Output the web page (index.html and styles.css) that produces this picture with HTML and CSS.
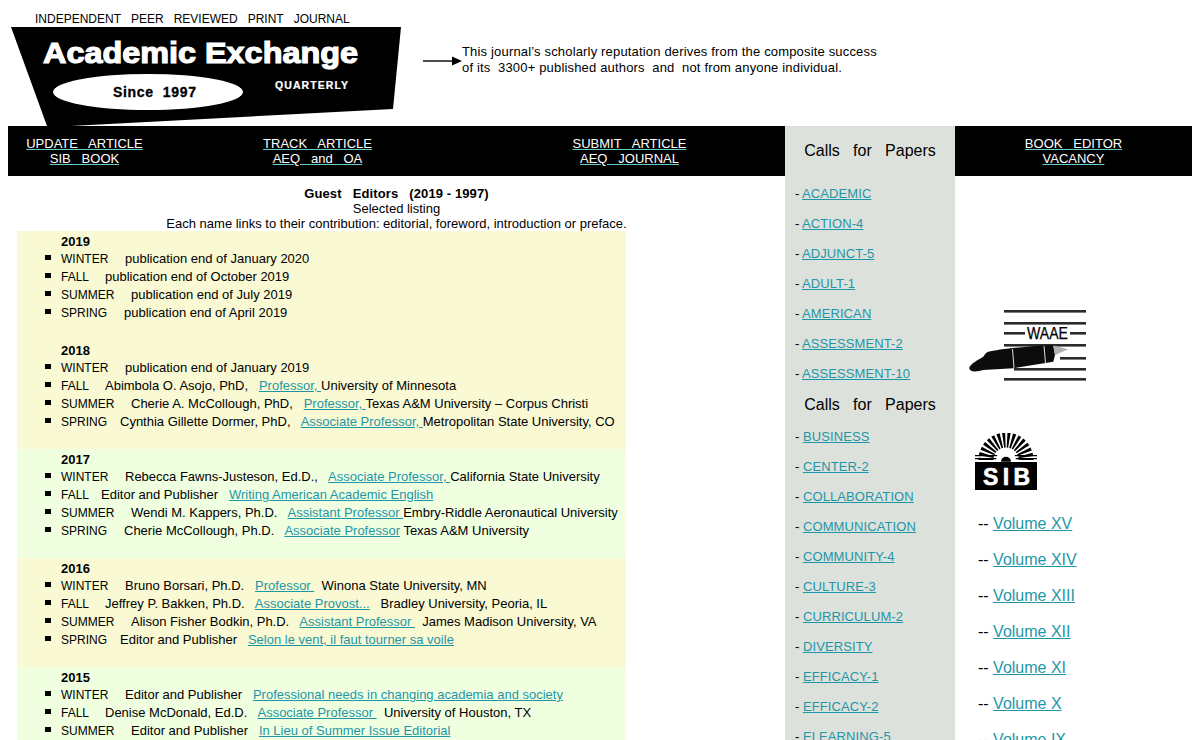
FILE: index.html
```html
<!DOCTYPE html>
<html lang="en">
<head>
<meta charset="utf-8">
<title>Academic Exchange Quarterly</title>
<link rel="stylesheet" href="styles.css">
</head>
<body>
<header class="masthead">
  <div class="brand">
    <div class="tagline">INDEPENDENT&nbsp;&nbsp; PEER&nbsp;&nbsp; REVIEWED&nbsp;&nbsp; PRINT&nbsp;&nbsp; JOURNAL</div>
    <svg class="logo" width="390" height="99" viewBox="0 0 390 99">
      <polygon points="0,0 390,0 382,82 60,99 36,99"/>
      <text class="logo-title" x="32" y="36" textLength="315" lengthAdjust="spacingAndGlyphs">Academic Exchange</text>
      <ellipse cx="137" cy="65" rx="95" ry="18" fill="#fff"/>
      <text class="logo-since" x="102" y="70" textLength="83">Since&nbsp; 1997</text>
      <text class="logo-q" x="264" y="62" textLength="73">QUARTERLY</text>
    </svg>
  </div>
  <div class="motto">
    <svg class="arrow" width="39" height="10" viewBox="0 0 39 10">
      <path d="M0 5H29" stroke="#000" stroke-width="1.4"/>
      <path d="M29 0.5L39 5L29 9.5Z"/>
    </svg>
    <p>This journal&rsquo;s scholarly reputation derives from the composite success<br>of its&nbsp; 3300+ published authors&nbsp; and&nbsp; not from anyone individual.</p>
  </div>
</header>
<div class="layout">
  <div class="left">
    <nav class="nav nav-main">
      <a href="#">UPDATE&nbsp;&nbsp; ARTICLE<br>SIB&nbsp;&nbsp; BOOK</a>
      <a href="#">TRACK&nbsp;&nbsp; ARTICLE<br>AEQ&nbsp;&nbsp; and&nbsp;&nbsp; OA</a>
      <a href="#">SUBMIT&nbsp;&nbsp; ARTICLE<br>AEQ&nbsp;&nbsp; JOURNAL</a>
    </nav>
    <main class="editors">
      <div class="intro"><b>Guest&nbsp;&nbsp; Editors&nbsp;&nbsp; (2019 - 1997)</b><br>Selected listing<br>Each name links to their contribution: editorial, foreword, introduction or preface.</div>
      <section class="band yellow tall">
        <h3>2019</h3>
        <ul>
          <li><span class="season winter">WINTER</span>publication end of January 2020</li>
          <li><span class="season fall">FALL</span>publication end of October 2019</li>
          <li><span class="season summer">SUMMER</span>publication end of July 2019</li>
          <li><span class="season spring">SPRING</span>publication end of April 2019</li>
        </ul>
        <h3 class="later">2018</h3>
        <ul>
          <li><span class="season winter">WINTER</span>publication end of January 2019</li>
          <li><span class="season fall">FALL</span>Abimbola O. Asojo, PhD,&nbsp;&nbsp; <a href="#">Professor, </a>University of Minnesota</li>
          <li><span class="season summer">SUMMER</span>Cherie A. McCollough, PhD,&nbsp;&nbsp; <a href="#">Professor, </a>Texas A&amp;M University &ndash; Corpus Christi</li>
          <li><span class="season spring tight">SPRING</span>Cynthia Gillette Dormer, PhD,&nbsp;&nbsp; <a href="#">Associate Professor, </a>Metropolitan State University, CO</li>
        </ul>
      </section>
      <section class="band green">
        <h3>2017</h3>
        <ul>
          <li><span class="season winter">WINTER</span>Rebecca Fawns-Justeson, Ed.D.,&nbsp;&nbsp; <a href="#">Associate Professor, </a>California State University</li>
          <li><span class="season fall tight">FALL</span>Editor and Publisher&nbsp;&nbsp; <a href="#">Writing American Academic English</a></li>
          <li><span class="season summer">SUMMER</span>Wendi M. Kappers, Ph.D.&nbsp;&nbsp; <a href="#">Assistant Professor </a>Embry-Riddle Aeronautical University</li>
          <li><span class="season spring">SPRING</span>Cherie McCollough, Ph.D.&nbsp;&nbsp; <a href="#">Associate Professor</a> Texas A&amp;M University</li>
        </ul>
      </section>
      <section class="band yellow">
        <h3>2016</h3>
        <ul>
          <li><span class="season winter">WINTER</span>Bruno Borsari, Ph.D.&nbsp;&nbsp; <a href="#">Professor&nbsp;</a>&nbsp; Winona State University, MN</li>
          <li><span class="season fall">FALL</span>Jeffrey P. Bakken, Ph.D.&nbsp;&nbsp; <a href="#">Associate Provost...</a>&nbsp;&nbsp; Bradley University, Peoria, IL</li>
          <li><span class="season summer">SUMMER</span>Alison Fisher Bodkin, Ph.D.&nbsp;&nbsp; <a href="#">Assistant Professor&nbsp;</a>&nbsp; James Madison University, VA</li>
          <li><span class="season spring tight">SPRING</span>Editor and Publisher&nbsp;&nbsp; <a href="#">Selon le vent, il faut tourner sa voile</a></li>
        </ul>
      </section>
      <section class="band green">
        <h3>2015</h3>
        <ul>
          <li><span class="season winter">WINTER</span>Editor and Publisher&nbsp;&nbsp; <a href="#">Professional needs in changing academia and society</a></li>
          <li><span class="season fall">FALL</span>Denise McDonald, Ed.D.&nbsp;&nbsp; <a href="#">Associate Professor&nbsp;</a>&nbsp; University of Houston, TX</li>
          <li><span class="season summer">SUMMER</span>Editor and Publisher&nbsp;&nbsp; <a href="#">In Lieu of Summer Issue Editorial</a></li>
        </ul>
      </section>
    </main>
  </div>
  <aside class="calls">
    <h2>Calls&nbsp;&nbsp; for&nbsp;&nbsp; Papers</h2>
    <ul class="topics">
      <li>- <a href="#">ACADEMIC</a></li>
      <li>- <a href="#">ACTION-4</a></li>
      <li>- <a href="#">ADJUNCT-5</a></li>
      <li>- <a href="#">ADULT-1</a></li>
      <li>- <a href="#">AMERICAN</a></li>
      <li>- <a href="#">ASSESSMENT-2</a></li>
      <li>- <a href="#">ASSESSMENT-10</a></li>
    </ul>
    <h2 class="again">Calls&nbsp;&nbsp; for&nbsp;&nbsp; Papers</h2>
    <ul class="topics topics-b">
      <li>- <a href="#">BUSINESS</a></li>
      <li>- <a href="#">CENTER-2</a></li>
      <li>- <a href="#">COLLABORATION</a></li>
      <li>- <a href="#">COMMUNICATION</a></li>
      <li>- <a href="#">COMMUNITY-4</a></li>
      <li>- <a href="#">CULTURE-3</a></li>
      <li>- <a href="#">CURRICULUM-2</a></li>
      <li>- <a href="#">DIVERSITY</a></li>
      <li>- <a href="#">EFFICACY-1</a></li>
      <li>- <a href="#">EFFICACY-2</a></li>
      <li>- <a href="#">ELEARNING-5</a></li>
    </ul>
  </aside>
  <div class="right">
    <nav class="nav nav-side"><a href="#">BOOK&nbsp;&nbsp; EDITOR<br>VACANCY</a></nav>
    <svg class="waae" width="120" height="74" viewBox="0 0 120 74">
      <g fill="#2b2b2b">
        <rect x="36" y="1" width="82" height="2.6"/>
        <rect x="36" y="13" width="82" height="2.6"/>
        <rect x="36" y="23" width="21" height="2.6"/>
        <rect x="102" y="23" width="16" height="2.6"/>
        <rect x="36" y="35" width="82" height="2.6"/>
        <rect x="92" y="48" width="26" height="2.6"/>
        <rect x="46" y="59" width="72" height="2.6"/>
        <rect x="36" y="69" width="82" height="2.6"/>
      </g>
      <text class="waae-text" x="59" y="30" textLength="41" lengthAdjust="spacingAndGlyphs">WAAE</text>
      <path d="M1.3 59.3C1.5 56 6 53 15.3 47.7C17 45 18 43.5 20.3 42.7C30 40.5 60 37 85.3 36L87 46L85.3 52.7L45.3 59.3L15.3 61C10 62.5 2 64 1.3 59.3Z" fill="#0c0c0c"/>
      <path d="M85 36.5L100.3 40.3L87 46Z" fill="#b0b0b0"/>
      <path d="M44.5 40L46 59M76 37L77.5 54" stroke="#ddd" stroke-width="1" fill="none"/>
    </svg>
    <svg class="sib" width="63" height="58" viewBox="0 0 63 58">
      <circle cx="31" cy="27" r="20" fill="none" stroke="#000" stroke-width="15" stroke-dasharray="1.9 1.4" pathLength="100"/>
      <rect x="0" y="27" width="62" height="3" fill="#fff"/>
      <path d="M0 25.6H62M0 22.6H62" stroke="#000" stroke-width="1.2"/>
      <circle cx="31" cy="27" r="10" fill="#fff"/>
      <rect x="0" y="29" width="62" height="28"/>
      <path d="M26 28.7A5 5 0 0 1 36 28.7Z"/>
      <text class="sib-text" x="8" y="52" textLength="47">SIB</text>
    </svg>
    <ul class="volumes">
      <li>-- <a href="#">Volume XV</a></li>
      <li>-- <a href="#">Volume XIV</a></li>
      <li>-- <a href="#">Volume XIII</a></li>
      <li>-- <a href="#">Volume XII</a></li>
      <li>-- <a href="#">Volume XI</a></li>
      <li>-- <a href="#">Volume X</a></li>
      <li>-- <a href="#">Volume IX</a></li>
    </ul>
  </div>
</div>
</body>
</html>
```
FILE: styles.css
```css
html, body { margin: 0; padding: 0; height: 740px; overflow: hidden; background: #fff; }
body { padding: 0 8px; font-family: "Liberation Sans", Arial, sans-serif; font-size: 13px; color: #000; }
a { color: #1f96a8; text-decoration: underline; }
ul { margin: 0; padding: 0; list-style: none; }

.masthead { display: flex; height: 126px; }
.brand { width: 393px; padding-left: 3px; flex: none; }
.tagline { font-size: 12px; line-height: 14px; padding: 12px 0 1px 24px; height: 14px; }
.logo { display: block; }
.logo polygon { fill: #000; }
.logo-title { font: bold 30px "Liberation Sans", sans-serif; fill: #fff; stroke: #fff; stroke-width: 1.2px; }
.logo-since { font: bold 14px "Liberation Sans", sans-serif; fill: #000; stroke: #000; stroke-width: 0.3px; }
.logo-q { font: bold 10.5px "Liberation Sans", sans-serif; fill: #fff; stroke: #fff; stroke-width: 0.2px; }
.motto { display: flex; align-items: center; padding: 44px 0 0 19px; height: 32px; }
.arrow { flex: none; margin-top: 2px; }
.motto p { margin: 0; font-size: 13px; letter-spacing: 0.17px; line-height: 16px; }

.layout { display: grid; grid-template-columns: 777px 170px 237px; }
.nav { background: #000; height: 50px; box-sizing: border-box; padding-top: 10px; line-height: 15px; text-align: center; font-size: 13px; }
.nav a { color: #fff; text-decoration-color: #6cc; }
.nav-main { display: grid; grid-template-columns: 153px 313px 311px; }

.intro { text-align: center; line-height: 15px; padding-top: 10px; height: 45px; }
.intro b { letter-spacing: 0.1px; }
.band { width: 609px; margin-left: 9px; height: 109px; box-sizing: border-box; padding-top: 2px; line-height: 18px; white-space: nowrap; }
.band h3 { margin: 0 0 0 44px; font-size: 13px; line-height: 18px; height: 17px; }
.band ul { padding-left: 44px; }
.band li::before { content: ""; display: inline-block; width: 6px; height: 5px; background: #000; margin-left: -16px; margin-right: 10px; vertical-align: 3px; }
.band .later { margin-top: 20px; }
.season { display: inline-block; font-size: 12px; }
.winter { width: 64px; }
.fall { width: 44px; }
.summer { width: 70px; }
.spring { width: 63px; }
.tight { margin-right: -4px; }
.tall { height: 218px; }
.yellow { background: #f9f9d3; }
.green { background: #f0ffe0; }

.calls { background: #dde1dc; height: 700px; overflow: hidden; }
.calls h2 { margin: 0; font-size: 16px; font-weight: normal; text-align: center; line-height: 18px; padding-top: 16px; height: 44px; }
.calls .again { padding-top: 0; height: 33px; }
.topics { padding-left: 10px; }
.topics li { height: 30px; line-height: 16px; font-size: 13px; }
.topics a { letter-spacing: 0.1px; margin-left: -1px; }
.topics-b a { margin-left: 0; }

.right { display: flex; flex-direction: column; align-items: flex-start; }
.nav-side { width: 100%; }
.waae { margin: 133px 0 0 13px; display: block; }
.sib { margin: 50px 0 0 20px; display: block; }
.volumes { margin: 23px 0 0 23px; }
.volumes li { font-size: 16px; height: 36px; line-height: 20px; }
.waae-text { font: 16px "Liberation Sans", sans-serif; stroke: #000; stroke-width: 0.25px; }
.sib-text { font: bold 23px "Liberation Sans", sans-serif; fill: #fff; stroke: #fff; stroke-width: 0.6px; }
```
